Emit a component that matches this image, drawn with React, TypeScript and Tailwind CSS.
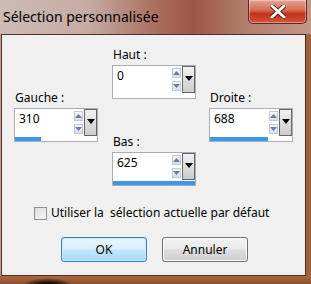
import React from 'react';

function Arrow({ up }: { up?: boolean }) {
  return (
    <div className="flex h-[10px] w-[9px] items-center justify-center border border-[#c3c9d3] bg-[linear-gradient(#f6f7fa,#d9dee7)]">
      <svg width="7" height="4" viewBox="0 0 7 4">
        {up ? <path d="M0 4 L3.5 0 L7 4 Z" fill="#6a7ba0" /> : <path d="M0 0 L3.5 4 L7 0 Z" fill="#6a7ba0" />}
      </svg>
    </div>
  );
}

function SpinBox({ label, value, bar }: { label: string; value: string; bar: number }) {
  return (
    <div className="flex w-[84px] flex-col">
      <div className="mb-[2px] h-4 pl-px text-[12px] leading-4 text-black">{label}</div>
      <div className="flex flex-col border border-[#a9adb5] bg-white">
        <div className="flex h-[27px]">
          <div className="flex-1 pl-[4px] pt-[2px] text-[12px] leading-4 text-black">{value}</div>
          <div className="flex flex-col gap-[3px] pt-[2px] pr-px">
            <Arrow up />
            <Arrow />
          </div>
          <div className="flex w-[13px] justify-center border border-[#666] bg-[linear-gradient(#f2f2f2,#cbcbcb)] pt-[9px]">
            <svg width="8" height="5" viewBox="0 0 8 5">
              <path d="M0 0 L4 5 L8 0 Z" fill="#000" />
            </svg>
          </div>
        </div>
        <div className="h-[5px] pt-px">
          <div className="h-[4px] bg-[#3a98ec]" style={{ width: bar }} />
        </div>
      </div>
    </div>
  );
}

export default function App() {
  return (
    <div className="flex h-[284px] w-[311px] flex-col overflow-hidden bg-[#a3603a] font-['Noto_Sans',sans-serif]">
      <div className="flex h-[34px] items-start bg-[linear-gradient(90deg,#cdbab6_0%,#c6aca6_28%,#ad7464_48%,#9c5646_62%,#b4806f_80%,#c2978a_100%)]">
        <div className="pl-[3px] pt-[7px] text-[14px] leading-5 text-black">Sélection personnalisée</div>
        <div className="ml-auto mr-[4px] flex h-[24px] w-[59px] items-center justify-center rounded-b-[5px] border border-t-0 border-[#5e2a20] bg-[linear-gradient(#e6a497_0%,#d66a52_45%,#c2301a_60%,#d4573d_100%)] shadow-[inset_0_0_0_1px_rgba(255,255,255,0.35)]">
          <svg width="16" height="13" viewBox="0 0 16 13">
            <path d="M2 1 L14 12 M14 1 L2 12" stroke="#4a1e18" strokeWidth="4.5" strokeLinecap="square" />
            <path d="M2 1 L14 12 M14 1 L2 12" stroke="#fff" strokeWidth="2.8" strokeLinecap="square" />
          </svg>
        </div>
      </div>
      <div className="flex h-[242px]">
        <div className="w-px bg-[#bf9e95]" />
        <div className="flex flex-1 flex-col border border-[#4e2f27] bg-[#f0f0f0]">
          <div className="flex pl-[12px] pt-[12px]">
            <div className="mt-[43px]">
              <SpinBox label="Gauche :" value="310" bar={26} />
            </div>
            <div className="ml-[14px] flex flex-col">
              <SpinBox label="Haut :" value="0" bar={0} />
              <div className="mt-[35px]">
                <SpinBox label="Bas :" value="625" bar={82} />
              </div>
            </div>
            <div className="ml-[13px] mt-[43px]">
              <SpinBox label="Droite :" value="688" bar={58} />
            </div>
          </div>
          <div className="mt-[19px] flex items-center pl-[32px] text-[12px] leading-4 text-black">
            <div className="h-[13px] w-[13px] border border-[#8e8f8f] bg-[linear-gradient(135deg,#dcdcdc,#f6f6f6)]" />
            <span className="ml-[4px] whitespace-pre">Utiliser la  sélection actuelle par défaut</span>
          </div>
          <div className="mt-[16px] flex gap-[15px] pl-[59px]">
            <div className="flex h-[25px] w-[86px] items-center justify-center rounded-[3px] border border-[#3c7fb1] bg-[linear-gradient(#eaf6fd_0%,#d9f0fc_45%,#bee6fd_55%,#a7d9f5_100%)] text-[12px] text-black shadow-[inset_0_0_0_1px_#c8e6f8]">
              OK
            </div>
            <div className="flex h-[25px] w-[86px] items-center justify-center rounded-[3px] border border-[#707070] bg-[linear-gradient(#f2f2f2_0%,#ebebeb_45%,#dddddd_55%,#cfcfcf_100%)] text-[12px] text-black shadow-[inset_0_0_0_1px_#fbfbfb]">
              Annuler
            </div>
          </div>
        </div>
        <div className="w-[5px] bg-[#a3603a]" />
      </div>
      <div className="flex-1 bg-[radial-gradient(ellipse_26px_8px_at_48px_10px,#1e0c06_40%,transparent_100%),linear-gradient(#a86840,#8e5030)]" />
    </div>
  );
}
